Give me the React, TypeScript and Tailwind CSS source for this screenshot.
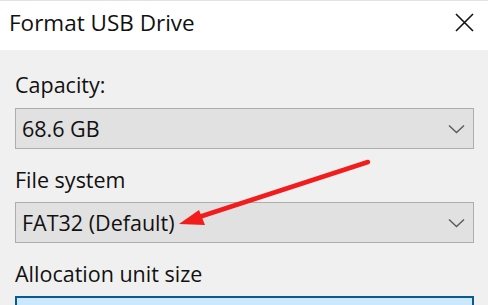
import React from "react";

function Chevron() {
  return (
    <svg width="17" height="10" viewBox="0 0 17 10" className="shrink-0">
      <path d="M1 1.5 L8.5 8.5 L16 1.5" fill="none" stroke="#5a5a5a" strokeWidth="1.4" />
    </svg>
  );
}

function Select({ value }: { value: string }) {
  return (
    <div className="flex h-[41px] items-center justify-between border border-[#adadad] bg-[#e1e1e1] pl-[6px] pr-[8px]">
      <span className="text-[21.5px] leading-none text-[#111]">{value}</span>
      <Chevron />
    </div>
  );
}

function Label({ children }: { children: React.ReactNode }) {
  return <div className="text-[21.5px] leading-[28px] text-[#111]">{children}</div>;
}

export default function App() {
  return (
    <div
      className="relative h-[305px] w-[488px] overflow-hidden bg-[#f0f0f0]"
      style={{ fontFamily: '"Open Sans", "Noto Sans", sans-serif' }}
    >
      <div className="flex h-[50px] items-center justify-between border-t border-[#e3e3e3] bg-white pb-[6px] pl-[9px] pr-[14px]">
        <span className="text-[22.5px] text-[#111]">Format USB Drive</span>
        <svg width="19" height="19" viewBox="0 0 19 19">
          <path d="M1 1 L18 18 M18 1 L1 18" stroke="#111" strokeWidth="1.6" />
        </svg>
      </div>

      <div className="flex flex-col pl-[15px] pr-[14px] pt-[21px]">
        <Label>Capacity:</Label>
        <div className="mt-[9px]">
          <Select value="68.6 GB" />
        </div>
        <div className="mt-[17px]">
          <Label>File system</Label>
        </div>
        <div className="mt-[8px]">
          <Select value="FAT32 (Default)" />
        </div>
        <div className="mt-[17px]">
          <Label>Allocation unit size</Label>
        </div>
        <div className="mt-[8px] h-[41px] border-2 border-[#0a5a8f] bg-[#cce8ff]" />
      </div>

      <svg className="pointer-events-none absolute left-0 top-0" width="488" height="305" viewBox="0 0 488 305">
        <line x1="368" y1="162" x2="196" y2="218" stroke="#f21c1c" strokeWidth="4.5" strokeLinecap="round" />
        <path d="M179 224 L199 210 L205 225 Z" fill="#f21c1c" />
      </svg>
    </div>
  );
}
